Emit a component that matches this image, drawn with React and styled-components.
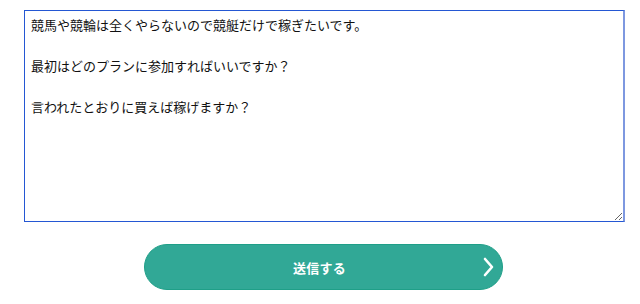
import React from 'react';
import styled, { createGlobalStyle } from 'styled-components';

const GlobalStyle = createGlobalStyle`
  html, body {
    margin: 0;
    padding: 0;
    background: #fff;
  }
  body {
    font-family: "Noto Sans CJK JP", "Liberation Sans", sans-serif;
  }
`

const message = `競馬や競輪は全くやらないので競艇だけで稼ぎたいです。

最初はどのプランに参加すればいいですか？

言われたとおりに買えば稼げますか？`

function ChevronIcon() {
  return (
    <svg width="12" height="20" viewBox="0 0 12 20" fill="none">
      <path d="M3 2 L10 10 L3 18" stroke="#fff" strokeWidth="2.6" strokeLinecap="round" strokeLinejoin="round" />
    </svg>
  )
}

export default function App() {
  return (
    <>
      <GlobalStyle />
      <Form onSubmit={(e) => e.preventDefault()}>
        <Message defaultValue={message} />
        <SubmitButton type="submit">
          <span />
          <Label>送信する</Label>
          <IconWrap>
            <ChevronIcon />
          </IconWrap>
        </SubmitButton>
      </Form>
    </>
  )
}

const Form = styled.form`
  display: flex;
  flex-direction: column;
  align-items: center;
  padding: 10px 15px 0 24px;
`

const Message = styled.textarea`
  box-sizing: border-box;
  width: 100%;
  height: 212px;
  margin: 0;
  padding: 4px 6px;
  border: 1px solid #2457d3;
  border-right: 2px solid #7e98e0;
  border-radius: 0;
  font-family: "Noto Sans CJK JP", "Liberation Sans", sans-serif;
  font-size: 13px;
  line-height: 20.5px;
  color: #111;
  background: #fff;
  outline: none;
`

const SubmitButton = styled.button`
  box-sizing: border-box;
  display: grid;
  grid-template-columns: 1fr auto 1fr;
  align-items: center;
  width: 359px;
  height: 46px;
  margin-top: 22px;
  margin-right: 2px;
  padding: 0 8px 0 0;
  border: 1px solid #1f9f88;
  border-radius: 23px;
  background: #31a896;
  color: #fff;
  cursor: pointer;
`

const Label = styled.span`
  font-family: "Noto Sans CJK JP", "Liberation Sans", sans-serif;
  font-size: 13px;
  font-weight: 700;
  letter-spacing: 0.3px;
`

const IconWrap = styled.span`
  display: flex;
  justify-content: flex-end;
  align-items: center;
`
